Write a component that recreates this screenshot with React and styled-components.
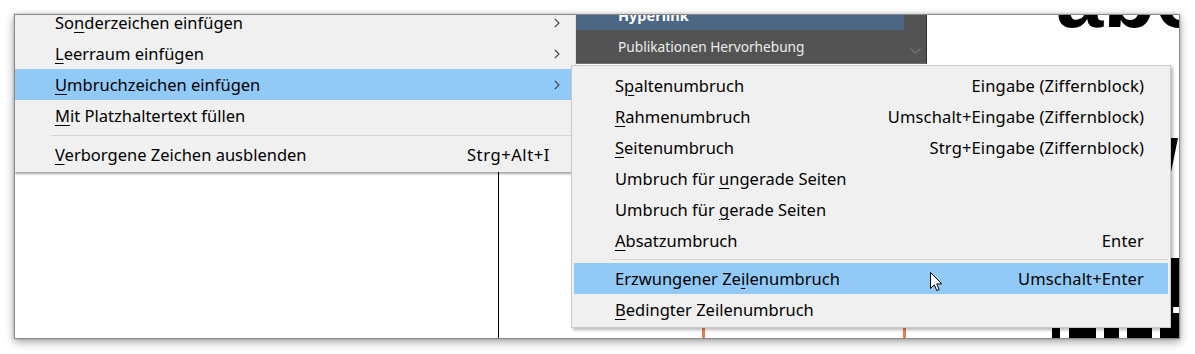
import React from 'react';
import styled, { createGlobalStyle } from 'styled-components';

const GlobalStyle = createGlobalStyle`
  html, body {
    margin: 0;
    background: #ffffff;
  }
  body {
    font-family: 'Noto Sans', 'Liberation Sans', sans-serif;
  }
`;

const Stage = styled.div`
  width: 1195px;
  height: 354px;
  padding: 14px 0 0 14px;
  box-sizing: border-box;
  overflow: hidden;
`;

const Window = styled.div`
  position: relative;
  width: 1166px;
  height: 325px;
  box-sizing: border-box;
  border: 1px solid #8a8a8a;
  background: #ffffff;
  box-shadow: 0 3px 9px rgba(0, 0, 0, 0.35), 0 0 3px rgba(0, 0, 0, 0.2);
  overflow: hidden;
`;

const Artwork = styled.svg`
  position: absolute;
  left: 0;
  top: 0;
`;

const BigLetters = styled.div`
  position: absolute;
  left: 1041px;
  top: -60px;
  font-family: 'Liberation Sans', Arial, sans-serif;
  font-weight: 700;
  font-size: 85px;
  line-height: 1;
  letter-spacing: 0;
  color: #000;
  white-space: nowrap;
`;

const StylePanel = styled.div`
  position: absolute;
  left: 561px;
  top: 0;
  width: 351px;
  height: 49px;
  display: flex;
  background: #535353;
  border-right: 1px solid #2e2e2e;
  border-bottom: 1px solid #6f6f6f;
  box-sizing: border-box;
`;

const StyleList = styled.div`
  flex: 1;
  display: flex;
  flex-direction: column;
`;

const StyleRow = styled.div`
  height: ${(p) => p.$h}px;
  display: flex;
  align-items: ${(p) => (p.$selected ? 'flex-end' : 'center')};
  padding: ${(p) => (p.$selected ? '0 0 8px 42px' : '0 0 0 42px')};
  box-sizing: border-box;
  overflow: hidden;
  background: ${(p) => (p.$selected ? '#4b6783' : 'transparent')};
  color: ${(p) => (p.$selected ? '#ffffff' : '#ececec')};
  font-size: ${(p) => (p.$selected ? 14.5 : 13.7)}px;
  font-weight: ${(p) => (p.$selected ? 700 : 400)};
  line-height: 1;
  white-space: nowrap;
`;

const ScrollColumn = styled.div`
  width: 22px;
  display: flex;
  align-items: flex-end;
  justify-content: center;
  padding-bottom: 9px;
  box-sizing: border-box;
`;

const Menu = styled.div`
  position: absolute;
  left: ${(p) => p.$x}px;
  top: ${(p) => p.$y}px;
  width: ${(p) => p.$w}px;
  box-sizing: border-box;
  background: #f0f0f0;
  padding: ${(p) => p.$pad};
  border: ${(p) => (p.$bordered ? '1px solid #c9c9c9' : 'none')};
  box-shadow: ${(p) =>
    p.$bordered
      ? '2px 2px 3px rgba(0, 0, 0, 0.28)'
      : '0 2px 2px rgba(0, 0, 0, 0.35)'};
  font-size: 16.5px;
  color: #000;
`;

const Row = styled.div`
  height: 31px;
  display: flex;
  align-items: center;
  padding: ${(p) => p.$pad};
  background: ${(p) => (p.$active ? '#91c9f7' : 'transparent')};
  white-space: nowrap;
`;

const Label = styled.span`
  flex: 1;
`;

const Key = styled.u`
  text-decoration-thickness: 1px;
  text-underline-offset: 3px;
`;

const Shortcut = styled.span`
  margin-right: ${(p) => p.$gap || 0}px;
  letter-spacing: ${(p) => p.$track || 0}px;
`;

const Arrow = styled.svg`
  width: 6px;
  height: 10px;
  flex: none;
`;

const Separator = styled.div`
  height: 1px;
  background: #d5d5d5;
  margin: ${(p) => p.$m};
`;

const Cursor = styled.svg`
  position: absolute;
  left: 915px;
  top: 257px;
`;

const Chevron = () => (
  <Arrow viewBox="0 0 6 10">
    <polyline points="0.8,0.8 5,5 0.8,9.2" fill="none" stroke="#3c3c3c" strokeWidth="1.1" />
  </Arrow>
);

const withKey = (text, idx) => (
  <>
    {text.slice(0, idx)}
    <Key>{text[idx]}</Key>
    {text.slice(idx + 1)}
  </>
);

const mainItems = [
  { text: 'Sonderzeichen einfügen', key: 2, sub: true },
  { text: 'Leerraum einfügen', key: 0, sub: true },
  { text: 'Umbruchzeichen einfügen', key: 0, sub: true, active: true },
  { text: 'Mit Platzhaltertext füllen', key: 0 },
  { sep: true },
  { text: 'Verborgene Zeichen ausblenden', key: 0, shortcut: 'Strg+Alt+I' },
];

const subItems = [
  { text: 'Spaltenumbruch', key: 1, shortcut: 'Eingabe (Ziffernblock)' },
  { text: 'Rahmenumbruch', key: 0, shortcut: 'Umschalt+Eingabe (Ziffernblock)' },
  { text: 'Seitenumbruch', key: 0, shortcut: 'Strg+Eingabe (Ziffernblock)' },
  { text: 'Umbruch für ungerade Seiten', key: 12 },
  { text: 'Umbruch für gerade Seiten', key: 12 },
  { text: 'Absatzumbruch', key: 0, shortcut: 'Enter' },
  { sep: true },
  { text: 'Erzwungener Zeilenumbruch', key: 14, shortcut: 'Umschalt+Enter', active: true },
  { text: 'Bedingter Zeilenumbruch', key: 0 },
];

const bars = [
  [1037, 8],
  [1054, 27],
  [1089, 15],
  [1112, 25],
  [1145, 19],
];

const App = () => (
  <>
    <GlobalStyle />
    <Stage>
      <Window>
        <Artwork width="1164" height="323" viewBox="0 0 1164 323">
          <rect x="483" y="0" width="1" height="323" fill="#000" />
          <rect x="687" y="312" width="3" height="11" fill="#e57f4f" />
          <rect x="888" y="312" width="3" height="11" fill="#e57f4f" />
          <polygon points="1150,123 1163,123 1155,162 1150,162" fill="#000" />
          <rect x="1150" y="243" width="14" height="49" fill="#000" />
          <rect x="1150" y="292" width="8" height="6" fill="#000" />
          <rect x="1150" y="298" width="14" height="25" fill="#000" />
          {bars.map(([x, w]) => (
            <rect key={x} x={x} y="312" width={w} height="11" fill="#000" />
          ))}
        </Artwork>
        <BigLetters>abc</BigLetters>

        <StylePanel>
          <StyleList>
            <StyleRow $selected $h={15}>Hyperlink</StyleRow>
            <StyleRow $h={33}>Publikationen Hervorhebung</StyleRow>
          </StyleList>
          <ScrollColumn>
            <svg width="11" height="6" viewBox="0 0 11 6">
              <polyline points="0.5,0.5 5.5,5.2 10.5,0.5" fill="none" stroke="#8a8a8a" strokeWidth="1" />
            </svg>
          </ScrollColumn>
        </StylePanel>

        <Menu $x={0} $y={-10} $w={560} $pad="2px 0">
          {mainItems.map((it, i) =>
            it.sep ? (
              <Separator key={i} $m="4px 0 3px 36px" />
            ) : (
              <Row key={i} $active={it.active} $pad="0 15px 0 40px">
                <Label>{withKey(it.text, it.key)}</Label>
                {it.shortcut && (
                  <Shortcut $gap={10} $track={0.6}>
                    {it.shortcut}
                  </Shortcut>
                )}
                {it.sub && <Chevron />}
              </Row>
            )
          )}
        </Menu>

        <Menu $x={556} $y={50} $w={600} $pad="4px 2px 2px" $bordered>
          {subItems.map((it, i) =>
            it.sep ? (
              <Separator key={i} $m="3px 0 3px 37px" />
            ) : (
              <Row key={i} $active={it.active} $pad="0 24px 0 41px">
                <Label>{withKey(it.text, it.key)}</Label>
                {it.shortcut && <Shortcut $track={0.15}>{it.shortcut}</Shortcut>}
              </Row>
            )
          )}
        </Menu>

        <Cursor width="13" height="20" viewBox="0 0 13 20">
          <path
            d="M0.5 0.5 L0.5 16.5 L4.3 12.8 L6.8 18.6 L9.2 17.6 L6.7 11.9 L11.8 11.9 Z"
            fill="#fff"
            stroke="#000"
            strokeWidth="1"
            strokeLinejoin="round"
          />
        </Cursor>
      </Window>
    </Stage>
  </>
);

export default App;
